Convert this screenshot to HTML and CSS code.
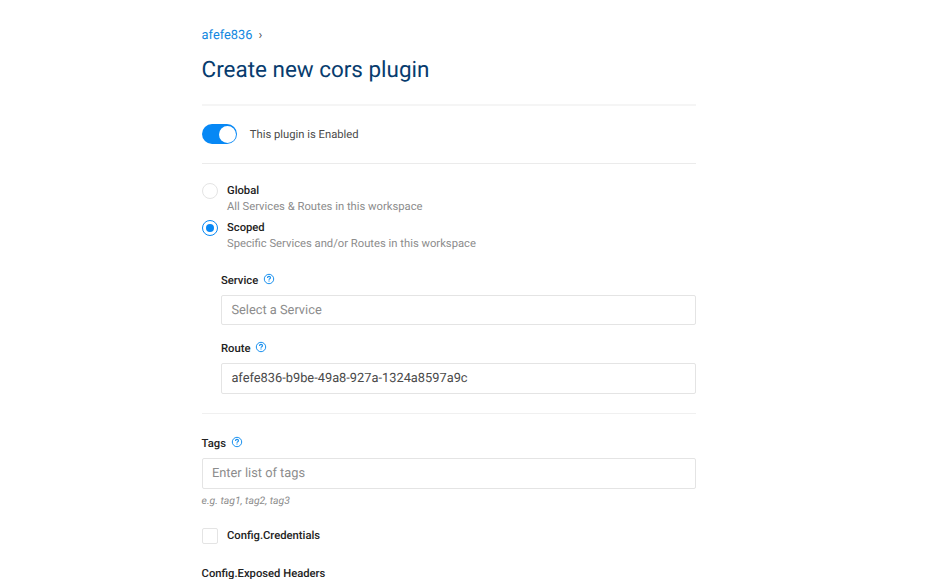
FILE: index.html
```html
<!DOCTYPE html>
<html lang="en">
<head>
<meta charset="utf-8">
<title>Create new cors plugin</title>
<link rel="stylesheet" href="styles.css">
</head>
<body>
<svg class="defs" aria-hidden="true">
  <symbol id="help" viewBox="0 0 12 12">
    <circle cx="6" cy="6" r="4.7" fill="none" stroke="currentColor" stroke-width="1"/>
    <path d="M4.5 4.9c0-.9.6-1.5 1.5-1.5S7.5 4 7.5 4.8C7.5 5.7 6 5.7 6 6.7M6 7.4v1.1" fill="none" stroke="currentColor" stroke-width="1.2"/>
  </symbol>
</svg>
<main class="page">
  <header class="header">
    <nav class="breadcrumb"><a class="crumb" href="#">afefe836</a><span class="sep">›</span></nav>
    <h1 class="title">Create new cors plugin</h1>
  </header>
  <section class="enable">
    <span class="switch"></span><span class="enable-text">This plugin is Enabled</span>
  </section>
  <section class="scope">
    <label class="option">
      <span class="radio"></span>
      <span class="option-text"><b class="name">Global</b><span class="desc">All Services &amp; Routes in this workspace</span></span>
    </label>
    <label class="option">
      <span class="radio checked"></span>
      <span class="option-text"><b class="name">Scoped</b><span class="desc">Specific Services and/or Routes in this workspace</span></span>
    </label>
    <div class="targets">
      <div class="field">
        <div class="label"><span>Service</span><svg class="help"><use href="#help"/></svg></div>
        <div class="input placeholder"><span>Select a Service</span></div>
      </div>
      <div class="field route">
        <div class="label"><span>Route</span><svg class="help"><use href="#help"/></svg></div>
        <div class="input"><span>afefe836-b9be-49a8-927a-1324a8597a9c</span></div>
      </div>
    </div>
  </section>
  <section class="config">
    <div class="label"><span>Tags</span><svg class="help"><use href="#help"/></svg></div>
    <div class="input placeholder"><span>Enter list of tags</span></div>
    <div class="hint">e.g. tag1, tag2, tag3</div>
    <label class="check"><span class="box"></span><b class="name">Config.Credentials</b></label>
    <div class="label headers"><span>Config.Exposed Headers</span></div>
  </section>
</main>
</body>
</html>
```
FILE: styles.css
```css
* { box-sizing: border-box; }
html, body { margin: 0; height: 579px; overflow: hidden; background: #fff; }
body { font-family: Roboto, "Liberation Sans", sans-serif; font-size: 11.24px; color: #4a4a4a; text-rendering: geometricPrecision; }
.defs { display: none; }
.page { width: 494px; margin-left: 201.6px; }
.header { height: 106px; padding-top: 26px; border-bottom: 2px solid #f5f5f5; }
.breadcrumb { display: flex; height: 20px; line-height: 20px; font-size: 12.83px; }
.crumb { color: #1187e0; text-decoration: none; }
.sep { margin-left: 6px; color: #555; }
.title { margin: 8px 0 0; font-size: 22.45px; font-weight: 400; line-height: 32px; color: #073c6e; white-space: nowrap; }
.enable { display: flex; align-items: center; height: 58px; border-bottom: 1px solid #ebebeb; }
.switch { width: 35.5px; height: 19.5px; margin-bottom: 1px; padding: 1px; border-radius: 10px; background: #0788f5; }
.switch::after { content: ""; display: block; width: 17px; height: 17px; margin: .25px 0 0 16.5px; border-radius: 50%; background: #fff; }
.enable-text { margin-left: 12.7px; }
.scope { height: 250px; padding-top: 19px; border-bottom: 1px solid #f0f0f0; }
.option { display: flex; height: 37px; }
.radio { width: 16px; height: 16px; border: 1px solid #e4e4e4; border-radius: 50%; }
.radio.checked { padding: 3px; border-color: #0788f5; }
.radio.checked::after { content: ""; display: block; width: 8px; height: 8px; border-radius: 50%; background: #0788f5; }
.option-text { display: flex; flex-direction: column; align-items: flex-start; margin-left: 9.4px; line-height: 16px; white-space: nowrap; }
.name { font-weight: 500; color: #222; }
.label { display: flex; height: 23px; line-height: 18px; font-weight: 500; color: #222; }
.desc { color: #8c8c8c; }
.targets { margin: 15px 0 0 19.4px; }
.help { width: 12px; height: 12px; margin: 1px 0 0 5px; color: #1a91ef; }
.input { display: flex; align-items: center; height: 31px; padding: 1px 0 0 9.4px; border: 1px solid #e4e4e4; border-radius: 2px; font-size: 12.83px; line-height: 20px; }
.input.placeholder { color: #8c8c8c; }
.field .input.placeholder { height: 30px; }
.field.route { margin-top: 15px; }
.config { padding-top: 21px; }
.config .help { margin-top: .5px; }
.hint { margin-top: 4px; height: 16px; font-size: 10.4px; line-height: 16px; font-style: italic; color: #8c8c8c; }
.check { display: flex; align-items: center; height: 16px; margin-top: 18px; }
.check .name { margin-left: 9.4px; }
.box { width: 16px; height: 16px; margin-top: 1px; border: 1px solid #e4e4e4; border-radius: 2px; }
.headers { margin-top: 22px; }
```
